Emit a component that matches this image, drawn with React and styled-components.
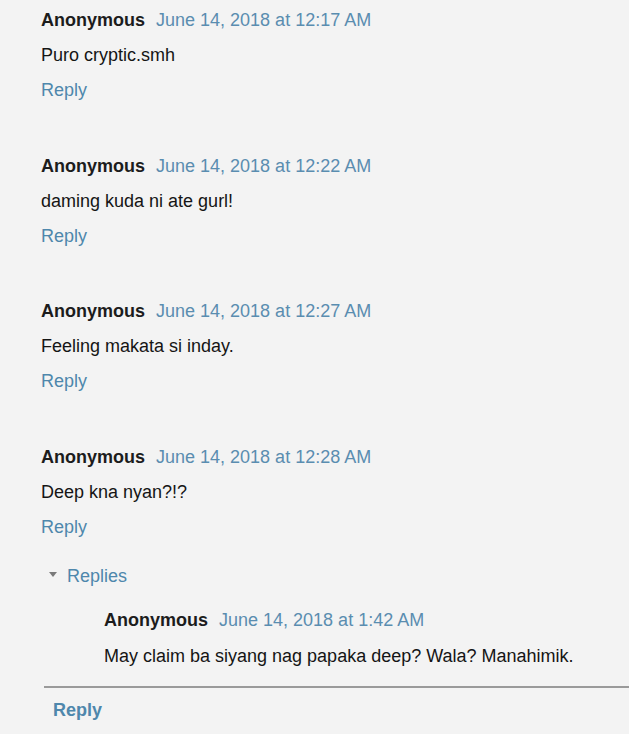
import React from "react";
import styled, { createGlobalStyle } from "styled-components";

const Global = createGlobalStyle`
  html, body { margin: 0; padding: 0; background: #f3f3f3; }
  body { font-family: "Liberation Sans", Arial, sans-serif; }
`;

const Page = styled.div`
  width: 629px;
  height: 734px;
  overflow: hidden;
  background: #f3f3f3;
  padding-top: 3px;
  box-sizing: border-box;
`;

const Comment = styled.div`
  padding-left: ${(p) => p.$indent}px;
  margin-bottom: ${(p) => p.$gap}px;
  font-size: 18px;
  line-height: ${(p) => p.$lh || 35}px;
`;

const Header = styled.div`
  display: flex;
  gap: 11px;
  align-items: baseline;
`;

const Name = styled.span`
  font-weight: bold;
  color: #1c1c1c;
`;

const DateLink = styled.span`
  color: #5a8db0;
`;

const Body = styled.div`
  color: #151515;
`;

const ReplyLink = styled.div`
  color: #4e87ac;
  font-weight: ${(p) => (p.$bold ? "bold" : "normal")};
  padding-left: ${(p) => p.$indent || 0}px;
  margin-top: ${(p) => p.$top || 0}px;
  line-height: 35px;
  font-size: 18px;
`;

const RepliesToggle = styled.div`
  display: flex;
  align-items: center;
  gap: 10px;
  padding-left: 49px;
  font-size: 18px;
  line-height: 35px;
  color: #4e87ac;
  margin-bottom: 8px;
`;

const Triangle = styled.span`
  width: 0;
  height: 0;
  border-left: 4px solid transparent;
  border-right: 4px solid transparent;
  border-top: 5px solid #7a7a7a;
  margin-top: -4px;
`;

const Thread = styled.div`
  margin-left: 44px;
  border-bottom: 2px solid #9a9a9a;
  padding-bottom: 12px;
`;

const comments = [
  { time: "12:17 AM", text: "Puro cryptic.smh" },
  { time: "12:22 AM", text: "daming kuda ni ate gurl!" },
  { time: "12:27 AM", text: "Feeling makata si inday." },
  { time: "12:28 AM", text: "Deep kna nyan?!?" },
];

export default function App() {
  return (
    <Page>
      <Global />
      {comments.map((c, i) => (
        <Comment key={i} $indent={41} $gap={i === comments.length - 1 ? 14 : 40.5}>
          <Header>
            <Name>Anonymous</Name>
            <DateLink>June 14, 2018 at {c.time}</DateLink>
          </Header>
          <Body>{c.text}</Body>
          <ReplyLink>Reply</ReplyLink>
        </Comment>
      ))}
      <RepliesToggle>
        <Triangle />
        <span>Replies</span>
      </RepliesToggle>
      <Thread>
        <Comment $indent={60} $gap={0} $lh={36}>
          <Header>
            <Name>Anonymous</Name>
            <DateLink>June 14, 2018 at 1:42 AM</DateLink>
          </Header>
          <Body>May claim ba siyang nag papaka deep? Wala? Manahimik.</Body>
        </Comment>
      </Thread>
      <ReplyLink $bold $indent={53} $top={5}>Reply</ReplyLink>
    </Page>
  );
}
